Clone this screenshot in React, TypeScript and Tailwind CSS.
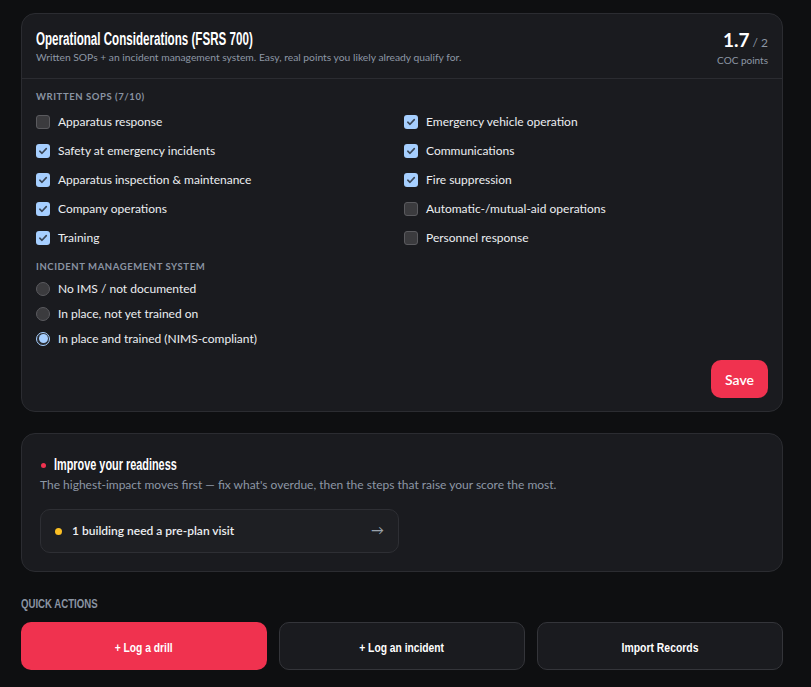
import React from "react";

const body = { fontFamily: "Lato, 'Noto Sans', sans-serif" };
const cond = { fontFamily: "'Liberation Sans', Arial, sans-serif" };

function Check({ checked, label }: { checked: boolean; label: string }) {
  return (
    <div className="flex items-center gap-2 h-[29px]">
      {checked ? (
        <span className="w-[14px] h-[14px] rounded-[3px] bg-[#a6cfff] flex items-center justify-center shrink-0">
          <svg width="10" height="10" viewBox="0 0 10 10" fill="none">
            <path d="M1.8 5.2 L4 7.3 L8.3 2.6" stroke="#3a4656" strokeWidth="1.6" strokeLinecap="round" strokeLinejoin="round" />
          </svg>
        </span>
      ) : (
        <span className="w-[14px] h-[14px] rounded-[3px] bg-[#3b3b3e] border border-[#5a5a5e] shrink-0" />
      )}
      <span className="text-[12px] text-[#eceef1]">{label}</span>
    </div>
  );
}

function Radio({ checked, label }: { checked: boolean; label: string }) {
  return (
    <div className="flex items-center gap-2 h-[25px]">
      {checked ? (
        <span className="w-[14px] h-[14px] rounded-full border border-[#a6cfff] bg-[#2a2d33] flex items-center justify-center shrink-0">
          <span className="w-[9px] h-[9px] rounded-full bg-[#a6cfff]" />
        </span>
      ) : (
        <span className="w-[14px] h-[14px] rounded-full bg-[#3b3b3e] border border-[#5a5a5e] shrink-0" />
      )}
      <span className="text-[12px] text-[#eceef1]">{label}</span>
    </div>
  );
}

export default function App() {
  const left = [
    ["Apparatus response", false],
    ["Safety at emergency incidents", true],
    ["Apparatus inspection & maintenance", true],
    ["Company operations", true],
    ["Training", true],
  ] as const;
  const right = [
    ["Emergency vehicle operation", true],
    ["Communications", true],
    ["Fire suppression", true],
    ["Automatic-/mutual-aid operations", false],
    ["Personnel response", false],
  ] as const;
  return (
    <div className="min-h-[687px] bg-[#0e0f11] pl-[21px] pr-[28px] pt-[13px] pb-4" style={body}>
      <div className="rounded-[14px] bg-[#1a1b1f] border border-[#2b2c31]">
        <div className="flex justify-between items-start px-[14px] pt-[14px] pb-[11px] border-b border-[#2b2c31]">
          <div>
            <div className="leading-[22px] h-[22px] whitespace-nowrap overflow-visible">
              <span className="inline-block text-[18px] font-bold text-white origin-left scale-x-[0.645]" style={cond}>
                Operational Considerations (FSRS 700)
              </span>
            </div>
            <div className="text-[10.3px] text-[#8d97a5] leading-[14px] h-[14px]">
              Written SOPs + an incident management system. Easy, real points you likely already qualify for.
            </div>
          </div>
          <div className="flex flex-col items-end">
            <div className="h-[24px] flex items-baseline">
              <span className="text-[19px] font-bold text-white leading-[24px]">1.7</span>
              <span className="text-[12px] text-[#8d97a5] leading-[24px] ml-[3px]">/ 2</span>
            </div>
            <div className="text-[10px] text-[#8d97a5] leading-[14px] h-[14px] mt-[1px]">COC points</div>
          </div>
        </div>
        <div className="px-[14px] pt-[11px] pb-[13px]">
          <div className="text-[9.5px] font-bold tracking-[0.06em] text-[#8a94a3] leading-[14px] h-[14px] mb-[3px]">
            WRITTEN SOPS (7/10)
          </div>
          <div className="grid grid-cols-2 gap-x-1">
            <div>
              {left.map(([l, c]) => (
                <Check key={l} label={l} checked={c} />
              ))}
            </div>
            <div>
              {right.map(([l, c]) => (
                <Check key={l} label={l} checked={c} />
              ))}
            </div>
          </div>
          <div className="text-[9.5px] font-bold tracking-[0.06em] text-[#8a94a3] leading-[14px] h-[14px] mt-[8px] mb-[2px]">
            INCIDENT MANAGEMENT SYSTEM
          </div>
          <Radio checked={false} label="No IMS / not documented" />
          <Radio checked={false} label="In place, not yet trained on" />
          <Radio checked={true} label="In place and trained (NIMS-compliant)" />
          <div className="flex justify-end mt-[9px]">
            <button className="h-[38px] px-[14px] rounded-[10px] bg-[#f0324f] text-white text-[14px] font-semibold">
              Save
            </button>
          </div>
        </div>
      </div>

      <div className="mt-[21px] rounded-[14px] bg-[#1a1b1f] border border-[#2b2c31] px-[18px] pt-[20px] pb-[18px]">
        <div className="flex items-center gap-[8px] h-[22px]">
          <span className="w-[5px] h-[5px] rounded-full bg-[#f0324f] ml-[1px] shrink-0" />
          <span className="inline-block text-[16px] font-bold text-white leading-[22px] origin-left scale-x-[0.68] whitespace-nowrap" style={cond}>
            Improve your readiness
          </span>
        </div>
        <div className="text-[12px] text-[#8d97a5] leading-[16px] mt-[1px]">
          The highest-impact moves first — fix what's overdue, then the steps that raise your score the most.
        </div>
        <div className="mt-[16px] w-[359px] h-[44px] rounded-[10px] bg-[#1e1f23] border border-[#2e2f34] flex items-center px-[14px]">
          <span className="w-[7px] h-[7px] rounded-full bg-[#fbbf24] shrink-0" />
          <span className="ml-[10px] text-[12px] font-semibold text-[#eceef1]">1 building need a pre-plan visit</span>
          <span className="ml-auto text-[#9aa3ad] text-[13px] mr-[0px]">→</span>
        </div>
      </div>

      <div className="mt-[21px] h-[18px] leading-[18px] whitespace-nowrap">
        <span className="inline-block text-[13px] font-bold text-[#8a94a3] origin-left scale-x-[0.74]" style={cond}>
          QUICK ACTIONS
        </span>
      </div>
      <div className="mt-[11px] grid grid-cols-3 gap-[12px]">
        <button className="h-[48px] rounded-[10px] bg-[#f0324f] text-white">
          <span className="inline-block text-[13px] font-bold scale-x-[0.79]" style={cond}>+ Log a drill</span>
        </button>
        <button className="h-[48px] rounded-[10px] bg-[#1a1b1f] border border-[#34353a] text-white">
          <span className="inline-block text-[13px] font-bold scale-x-[0.79]" style={cond}>+ Log an incident</span>
        </button>
        <button className="h-[48px] rounded-[10px] bg-[#1a1b1f] border border-[#34353a] text-white">
          <span className="inline-block text-[13px] font-bold scale-x-[0.8]" style={cond}>Import Records</span>
        </button>
      </div>
    </div>
  );
}
